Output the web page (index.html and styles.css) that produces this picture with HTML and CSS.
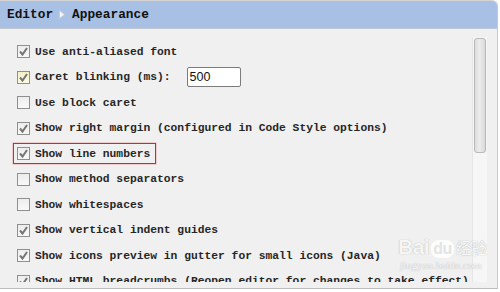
FILE: index.html
```html
<!DOCTYPE html>
<html>
<head>
<meta charset="utf-8">
<link rel="stylesheet" href="styles.css">
</head>
<body>
<div class="panel">
  <div class="header">
    <span class="crumb">Editor</span>
    <svg class="arrow" width="6" height="9" viewBox="0 0 6 9"><polygon points="0.5,0.5 5.5,4.5 0.5,8.5" fill="#f2f4f8" stroke="#c4ccd8" stroke-width="0.8"/></svg>
    <span class="crumb">Appearance</span>
  </div>
  <div class="body">
    <div class="list">
      <div class="row"><label class="opt"><span class="cb on"><svg viewBox="0 0 11 11"><path d="M2 5.5 L4.5 8.5 L9 2" fill="none" stroke="#757575" stroke-width="2"/></svg></span>Use anti-aliased font</label></div>
      <div class="row"><label class="opt"><span class="cb on focus"><svg viewBox="0 0 11 11"><path d="M2 5.5 L4.5 8.5 L9 2" fill="none" stroke="#757575" stroke-width="2"/></svg></span>Caret blinking (ms):</label><span class="field">500</span></div>
      <div class="row"><label class="opt"><span class="cb"></span>Use block caret</label></div>
      <div class="row"><label class="opt"><span class="cb on"><svg viewBox="0 0 11 11"><path d="M2 5.5 L4.5 8.5 L9 2" fill="none" stroke="#757575" stroke-width="2"/></svg></span>Show right margin (configured in Code Style options)</label></div>
      <div class="row"><label class="opt-marked"><span class="cb on"><svg viewBox="0 0 11 11"><path d="M2 5.5 L4.5 8.5 L9 2" fill="none" stroke="#757575" stroke-width="2"/></svg></span>Show line numbers</label></div>
      <div class="row"><label class="opt"><span class="cb"></span>Show method separators</label></div>
      <div class="row"><label class="opt"><span class="cb"></span>Show whitespaces</label></div>
      <div class="row"><label class="opt"><span class="cb on"><svg viewBox="0 0 11 11"><path d="M2 5.5 L4.5 8.5 L9 2" fill="none" stroke="#757575" stroke-width="2"/></svg></span>Show vertical indent guides</label></div>
      <div class="row"><label class="opt"><span class="cb on"><svg viewBox="0 0 11 11"><path d="M2 5.5 L4.5 8.5 L9 2" fill="none" stroke="#757575" stroke-width="2"/></svg></span>Show icons preview in gutter for small icons (Java)</label></div>
      <div class="row"><label class="opt"><span class="cb on"><svg viewBox="0 0 11 11"><path d="M2 5.5 L4.5 8.5 L9 2" fill="none" stroke="#757575" stroke-width="2"/></svg></span>Show HTML breadcrumbs (Reopen editor for changes to take effect)</label></div>
    </div>
    <div class="scroll"><div class="thumb"></div></div>
  </div>
  <div class="watermark">
    <div class="wm-main">Bai<span class="du">du</span><span class="wm-cn">经验</span></div>
    <div class="wm-url">jingyan.baidu.com</div>
  </div>
</div>
</body>
</html>
```
FILE: styles.css
```css
html, body {
  margin: 0;
  padding: 0;
  background: #ffffff;
}
.panel {
  position: relative;
  width: 497px;
  height: 287px;
  border-top: 1px solid #d4d4d4;
  border-right: 1px solid #c9c9c9;
  border-bottom: 1px solid #bdbdbd;
  border-top-right-radius: 6px;
  background: #f0f0f0;
  overflow: hidden;
  display: flex;
  flex-direction: column;
}
.header {
  height: 27px;
  flex: none;
  background: #a7c0e4;
  border-bottom: 1px solid #c3c9d2;
  display: flex;
  align-items: center;
  padding-left: 7px;
  gap: 6px;
  font-family: "Liberation Mono", monospace;
  font-weight: bold;
  font-size: 12.8px;
  color: #111;
}
.arrow { margin: 0 1px 0 0; }
.body {
  flex: 1;
  display: flex;
  min-height: 0;
}
.list {
  flex: 1;
  padding-top: 10px;
  margin-bottom: 6px;
  overflow: hidden;
  font-family: "Liberation Mono", monospace;
  font-weight: bold;
  font-size: 11.3px;
  color: #262626;
}
.row {
  height: 25.5px;
  display: flex;
  align-items: center;
  padding-left: 13px;
  white-space: nowrap;
}
.opt, .opt-marked {
  display: inline-flex;
  align-items: center;
  gap: 5px;
  padding: 3px 5px 3px 3px;
  border: 1px solid transparent;
}
.opt-marked {
  border: 1px solid #ee1c24;
  box-shadow: 0 0 0 0.5px rgba(238, 28, 36, 0.35);
}
.cb {
  width: 11px;
  height: 11px;
  flex: none;
  border: 1px solid #8e8f8f;
  background: linear-gradient(#ededed, #f8f8f8);
  display: flex;
}
.cb svg { width: 11px; height: 11px; }
.cb.focus {
  border-color: #a39a22;
  background: linear-gradient(#f3f0c8, #fbfae6);
}
.field {
  margin-left: 10px;
  width: 50px;
  height: 18px;
  border: 1px solid #7b7b7b;
  border-radius: 2px;
  background: #fff;
  font-family: "Liberation Sans", Arial, sans-serif;
  font-weight: normal;
  font-size: 12.5px;
  color: #111;
  line-height: 18px;
  padding-left: 2px;
}
.scroll {
  width: 14px;
  flex: none;
  margin: 8px 10px 6px 0;
  background: #f6f6f6;
  border-left: 1px solid #e6e6e6;
}
.thumb {
  margin: 1px 1px 0 1px;
  height: 113px;
  border: 1px solid #b9b9b9;
  border-radius: 3px;
  background: linear-gradient(90deg, #dcdcdc, #ececec 45%, #d9d9d9);
}
.watermark {
  position: absolute;
  left: 398px;
  top: 234px;
  color: rgba(255,255,255,0.92);
  text-shadow: 0 0 1px rgba(0,0,0,0.35);
  font-family: "Liberation Sans", Arial, "Noto Sans CJK SC", sans-serif;
  pointer-events: none;
}
.wm-main {
  font-size: 21px;
  font-weight: bold;
  line-height: 24px;
  letter-spacing: -0.5px;
}
.du {
  display: inline-block;
  background: rgba(255,255,255,0.85);
  color: #e4e4e4;
  border-radius: 8px;
  padding: 0 2px;
  font-size: 16px;
  line-height: 18px;
  margin: 0 2px;
  text-shadow: none;
}
.wm-cn {
  font-size: 16px;
  font-family: "Noto Sans CJK SC", sans-serif;
  font-weight: normal;
}
.wm-url {
  font-family: "Liberation Serif", serif;
  font-size: 11px;
  line-height: 12px;
  margin-left: 2px;
}
```
